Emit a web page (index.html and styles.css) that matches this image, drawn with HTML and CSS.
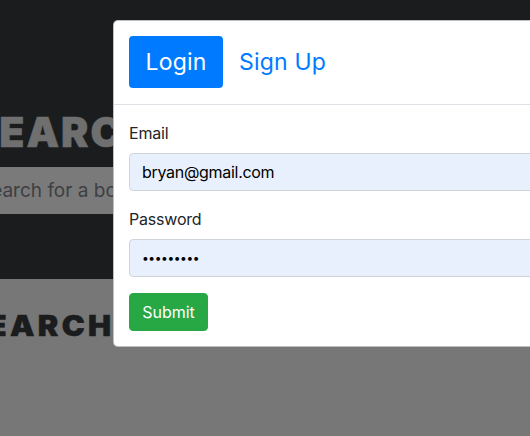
FILE: index.html
```html
<!DOCTYPE html>
<html>
<head>
<meta charset="utf-8">
<link rel="stylesheet" href="styles.css">
</head>
<body>
<header class="hero">
  <h1 class="hero-title">SEARCH</h1>
  <div class="search-box">Search for a book</div>
</header>
<main class="results">
  <h2 class="results-title">SEARCH</h2>
</main>
<div class="modal">
  <div class="modal-header">
    <button class="tab tab-active">Login</button>
    <button class="tab">Sign Up</button>
  </div>
  <form class="modal-body">
    <div class="form-group">
      <label class="label">Email</label>
      <div class="input">bryan@gmail.com</div>
    </div>
    <div class="form-group">
      <label class="label">Password</label>
      <div class="input input-pass">•••••••••</div>
    </div>
    <button class="submit" type="button">Submit</button>
  </form>
</div>
</body>
</html>
```

FILE: styles.css
```css
* { box-sizing: border-box; }
html, body { margin: 0; padding: 0; }
body {
  width: 530px;
  height: 436px;
  overflow: hidden;
  background: #777777;
  font-family: Inter, "Liberation Sans", sans-serif;
  position: relative;
}
.hero {
  background: #1b1c1e;
  height: 279px;
  padding-top: 112px;
}
.hero-title {
  margin: 0 0 0 -30px;
  font-weight: 900;
  font-size: 41px;
  line-height: 41px;
  letter-spacing: 2px;
  white-space: nowrap;
  color: #6f6f6f;
  -webkit-text-stroke: 0.6px #6f6f6f;
}
.search-box {
  margin: 14px 0 0 -40px;
  width: 240px;
  height: 47px;
  background: #7a7a7a;
  color: #3d3f43;
  font-size: 19px;
  line-height: 47px;
  padding-left: 19px;
  white-space: nowrap;
}
.results { padding-top: 33px; }
.results-title {
  margin: 0 0 0 -36px;
  font-weight: 900;
  font-size: 28px;
  line-height: 28px;
  letter-spacing: 3px;
  white-space: nowrap;
  color: #1b1c1e;
  -webkit-text-stroke: 0.5px #1b1c1e;
  transform: scaleX(1.1);
  transform-origin: 0 0;
}
.modal {
  position: absolute;
  left: 113px;
  top: 20px;
  width: 500px;
  background: #fff;
  border: 1px solid rgba(0,0,0,.25);
  border-radius: 5px;
}
.modal-header {
  display: flex;
  gap: 16px;
  padding: 15px 15px 16px;
  border-bottom: 1px solid #dee2e6;
}
.tab {
  font-family: inherit;
  font-size: 23px;
  line-height: 32px;
  height: 52px;
  padding: 10px 0;
  border: 0;
  border-radius: 4px;
  background: transparent;
  color: #007bff;
  letter-spacing: 0.2px;
}
.tab-active { width: 94px; background: #007bff; color: #fff; }
.modal-body { padding: 16px 15px 15px; }
.form-group { margin-bottom: 16px; }
.label {
  display: block;
  font-size: 16px;
  line-height: 24px;
  margin-bottom: 8px;
  color: #212529;
  letter-spacing: -0.2px;
}
.input {
  height: 38px;
  padding: 6px 12px;
  font-size: 16px;
  line-height: 24px;
  color: #000;
  background: #e8f0fe;
  border: 1px solid #ced4da;
  border-radius: 4px;
  letter-spacing: -0.3px;
}
.input-pass { font-size: 12px; letter-spacing: -0.4px; }
.submit {
  font-family: inherit;
  font-size: 16px;
  line-height: 24px;
  width: 79px;
  padding: 6px 0;
  border: 1px solid #28a745;
  border-radius: 4px;
  background: #28a745;
  color: #fff;
}
```
